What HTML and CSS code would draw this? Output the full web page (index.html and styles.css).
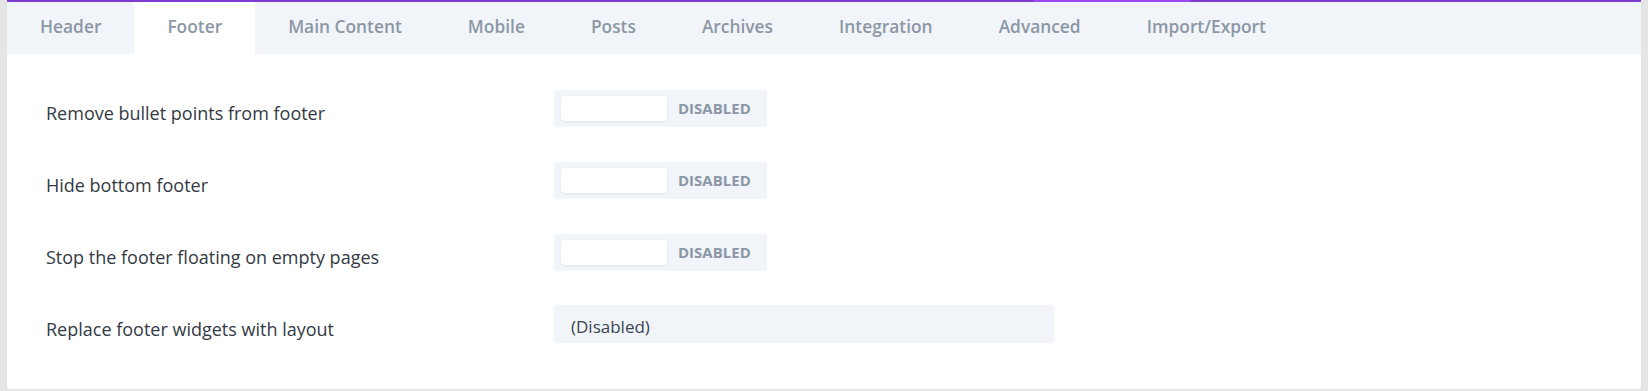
FILE: index.html
```html
<html lang="en">
<head>
    <meta charset="UTF-8">
    <title>Theme Options - Footer</title>
    <link rel="stylesheet" href="styles.css">
</head>
<body>

<div class="panel">
    <div class="tabs">
        <div class="tab">Header</div>
        <div class="tab active">Footer</div>
        <div class="tab">Main Content</div>
        <div class="tab">Mobile</div>
        <div class="tab">Posts</div>
        <div class="tab">Archives</div>
        <div class="tab">Integration</div>
        <div class="tab">Advanced</div>
        <div class="tab">Import/Export</div>
    </div>

    <div class="options">
        <div class="option">
            <div class="label">Remove bullet points from footer</div>
            <div class="toggle"><span class="knob"></span><span class="state">Disabled</span></div>
        </div>
        <div class="option">
            <div class="label">Hide bottom footer</div>
            <div class="toggle"><span class="knob"></span><span class="state">Disabled</span></div>
        </div>
        <div class="option">
            <div class="label">Stop the footer floating on empty pages</div>
            <div class="toggle"><span class="knob"></span><span class="state">Disabled</span></div>
        </div>
        <div class="option">
            <div class="label">Replace footer widgets with layout</div>
            <div class="select">(Disabled)</div>
        </div>
    </div>
</div>

</body>
</html>
```

FILE: styles.css
```css
body {
    margin: 0;
    padding: 0 7px 3px 7px;
    background-color: #e5e5e5;
    font-family: "Open Sans", sans-serif;
}

.panel {
    background-color: white;
    border-radius: 0 0 3px 3px;
    padding-bottom: 46px;
}

.tabs {
    display: flex;
    background-color: #f1f4f9;
    border-top: 2px solid #7e3bd0;
    border-image: linear-gradient(to right, #7e3bd0 1027px, #9b48ec 1027px, #9b48ec 1184px, #7e3bd0 1184px) 1;
    border-bottom: none;
    border-left: none;
    border-right: none;
    height: 52px;
}

.tab {
    padding: 0 33px;
    line-height: 49px;
    font-size: 17.35px;
    font-weight: 600;
    color: #8c97a5;
}

.tab.active {
    background-color: white;
}

.options {
    padding: 35px 0 0 39px;
}

.option {
    display: flex;
    align-items: center;
    height: 38px;
    margin-bottom: 34px;
}

.option:last-child {
    margin-bottom: 0;
}

.label {
    width: 508px;
    margin-top: 9px;
    font-size: 18px;
    font-weight: 500;
    color: #333a44;
}

.toggle {
    display: flex;
    align-items: center;
    width: 213px;
    height: 37px;
    box-sizing: border-box;
    padding: 0 7px;
    background-color: #f1f4f9;
    border-radius: 3px;
}

.knob {
    width: 106px;
    height: 25px;
    background-color: white;
    border-radius: 4px;
    box-shadow: 0 1px 3px rgba(0, 0, 0, 0.08);
}

.state {
    margin-left: 11px;
    font-size: 15px;
    font-weight: 700;
    text-transform: uppercase;
    color: #8c97a5;
}

.select {
    width: 500px;
    height: 38px;
    box-sizing: border-box;
    padding: 6px 17px 0 17px;
    line-height: 32px;
    background-color: #f1f4f9;
    border-radius: 3px;
    font-size: 17px;
    font-weight: 500;
    color: #3b4450;
}
```
